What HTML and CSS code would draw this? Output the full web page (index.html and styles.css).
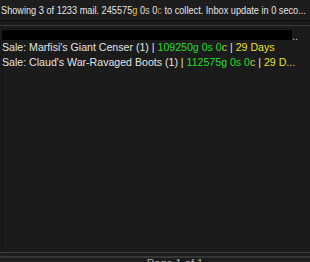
FILE: index.html
```html
<!DOCTYPE html>
<html lang="en">
<head>
    <meta charset="UTF-8">
    <title>Mail Inbox</title>
    <link rel="stylesheet" href="styles.css">
</head>
<body>
    <div class="frame">
        <div class="status"><span class="status-text">Showing 3 of 1233 mail. 245575<span class="gold">g</span> 0<span class="silver">s</span> 0<span class="copper">c</span> to collect. Inbox update in 0 seco...</span></div>
        <div class="rule"></div>

        <div class="list">
            <div class="row row-hidden"><span class="mask"></span><span class="tail">..</span></div>
            <div class="row">Sale: Marfisi's Giant Censer (1) | <span class="money">109250g 0s 0<span class="copper-g">c</span></span> | <span class="days">29 Days</span></div>
            <div class="row">Sale: Claud's War-Ravaged Boots (1) | <span class="money">112575g 0s 0<span class="copper-g">c</span></span> | <span class="days">29 D...</span></div>
        </div>

        <div class="footer">
            <div class="footer-bar"></div>
            <div class="footer-text">Page 1 of 1</div>
        </div>
    </div>
</body>
</html>
```

FILE: styles.css
```css
body {
    margin: 0;
    background-color: #1b1b1b;
    font-family: 'Liberation Sans', Arial, sans-serif;
    color: #e2e2e2;
    overflow: hidden;
}
.frame {
    height: 262px;
    display: flex;
    flex-direction: column;
}
.status {
    height: 20px;
    line-height: 21px;
    padding-left: 1px;
    font-size: 11px;
    white-space: nowrap;
    overflow: hidden;
    background-color: #1d1d1d;
    border-bottom: 1px solid #111;
}
/* the game font is a narrow face, squeeze the regular one */
.status-text {
    display: inline-block;
    transform: scaleX(0.835);
    transform-origin: left center;
}
.gold { color: #e8c020; }
.silver { color: #c8c8c8; }
.copper { color: #d08040; }
.rule {
    height: 4px;
    border-bottom: 1px solid #3a3a3a;
}
.list {
    flex: 1;
    padding-top: 3px;
    border-left: 1px solid #141414;
    margin-left: 2px;
}
.row {
    height: 14.6px;
    line-height: 15px;
    font-size: 10.6px;
    white-space: nowrap;
    margin-left: -2px;
    padding-left: 1px;
}
.row-hidden {
    height: 11px;
    display: flex;
    align-items: center;
}
.mask {
    width: 290px;
    height: 10px;
    background-color: #000;
}
.tail {
    font-size: 11px;
    line-height: 8px;
    align-self: flex-end;
    color: #ccc;
}
.money { color: #22dd22; }
.copper-g { color: #c8d040; }
.days { color: #e6e020; }
.footer {
    height: 9px;
    overflow: hidden;
    border-top: 1px solid #3a3a3a;
    background-color: #1d1d1d;
}
.footer-bar {
    height: 3px;
    border-bottom: 2px solid #363636;
}
.footer-text {
    font-size: 11px;
    line-height: 11px;
    text-align: center;
    padding-left: 40px;
    color: #aaa;
}
```
